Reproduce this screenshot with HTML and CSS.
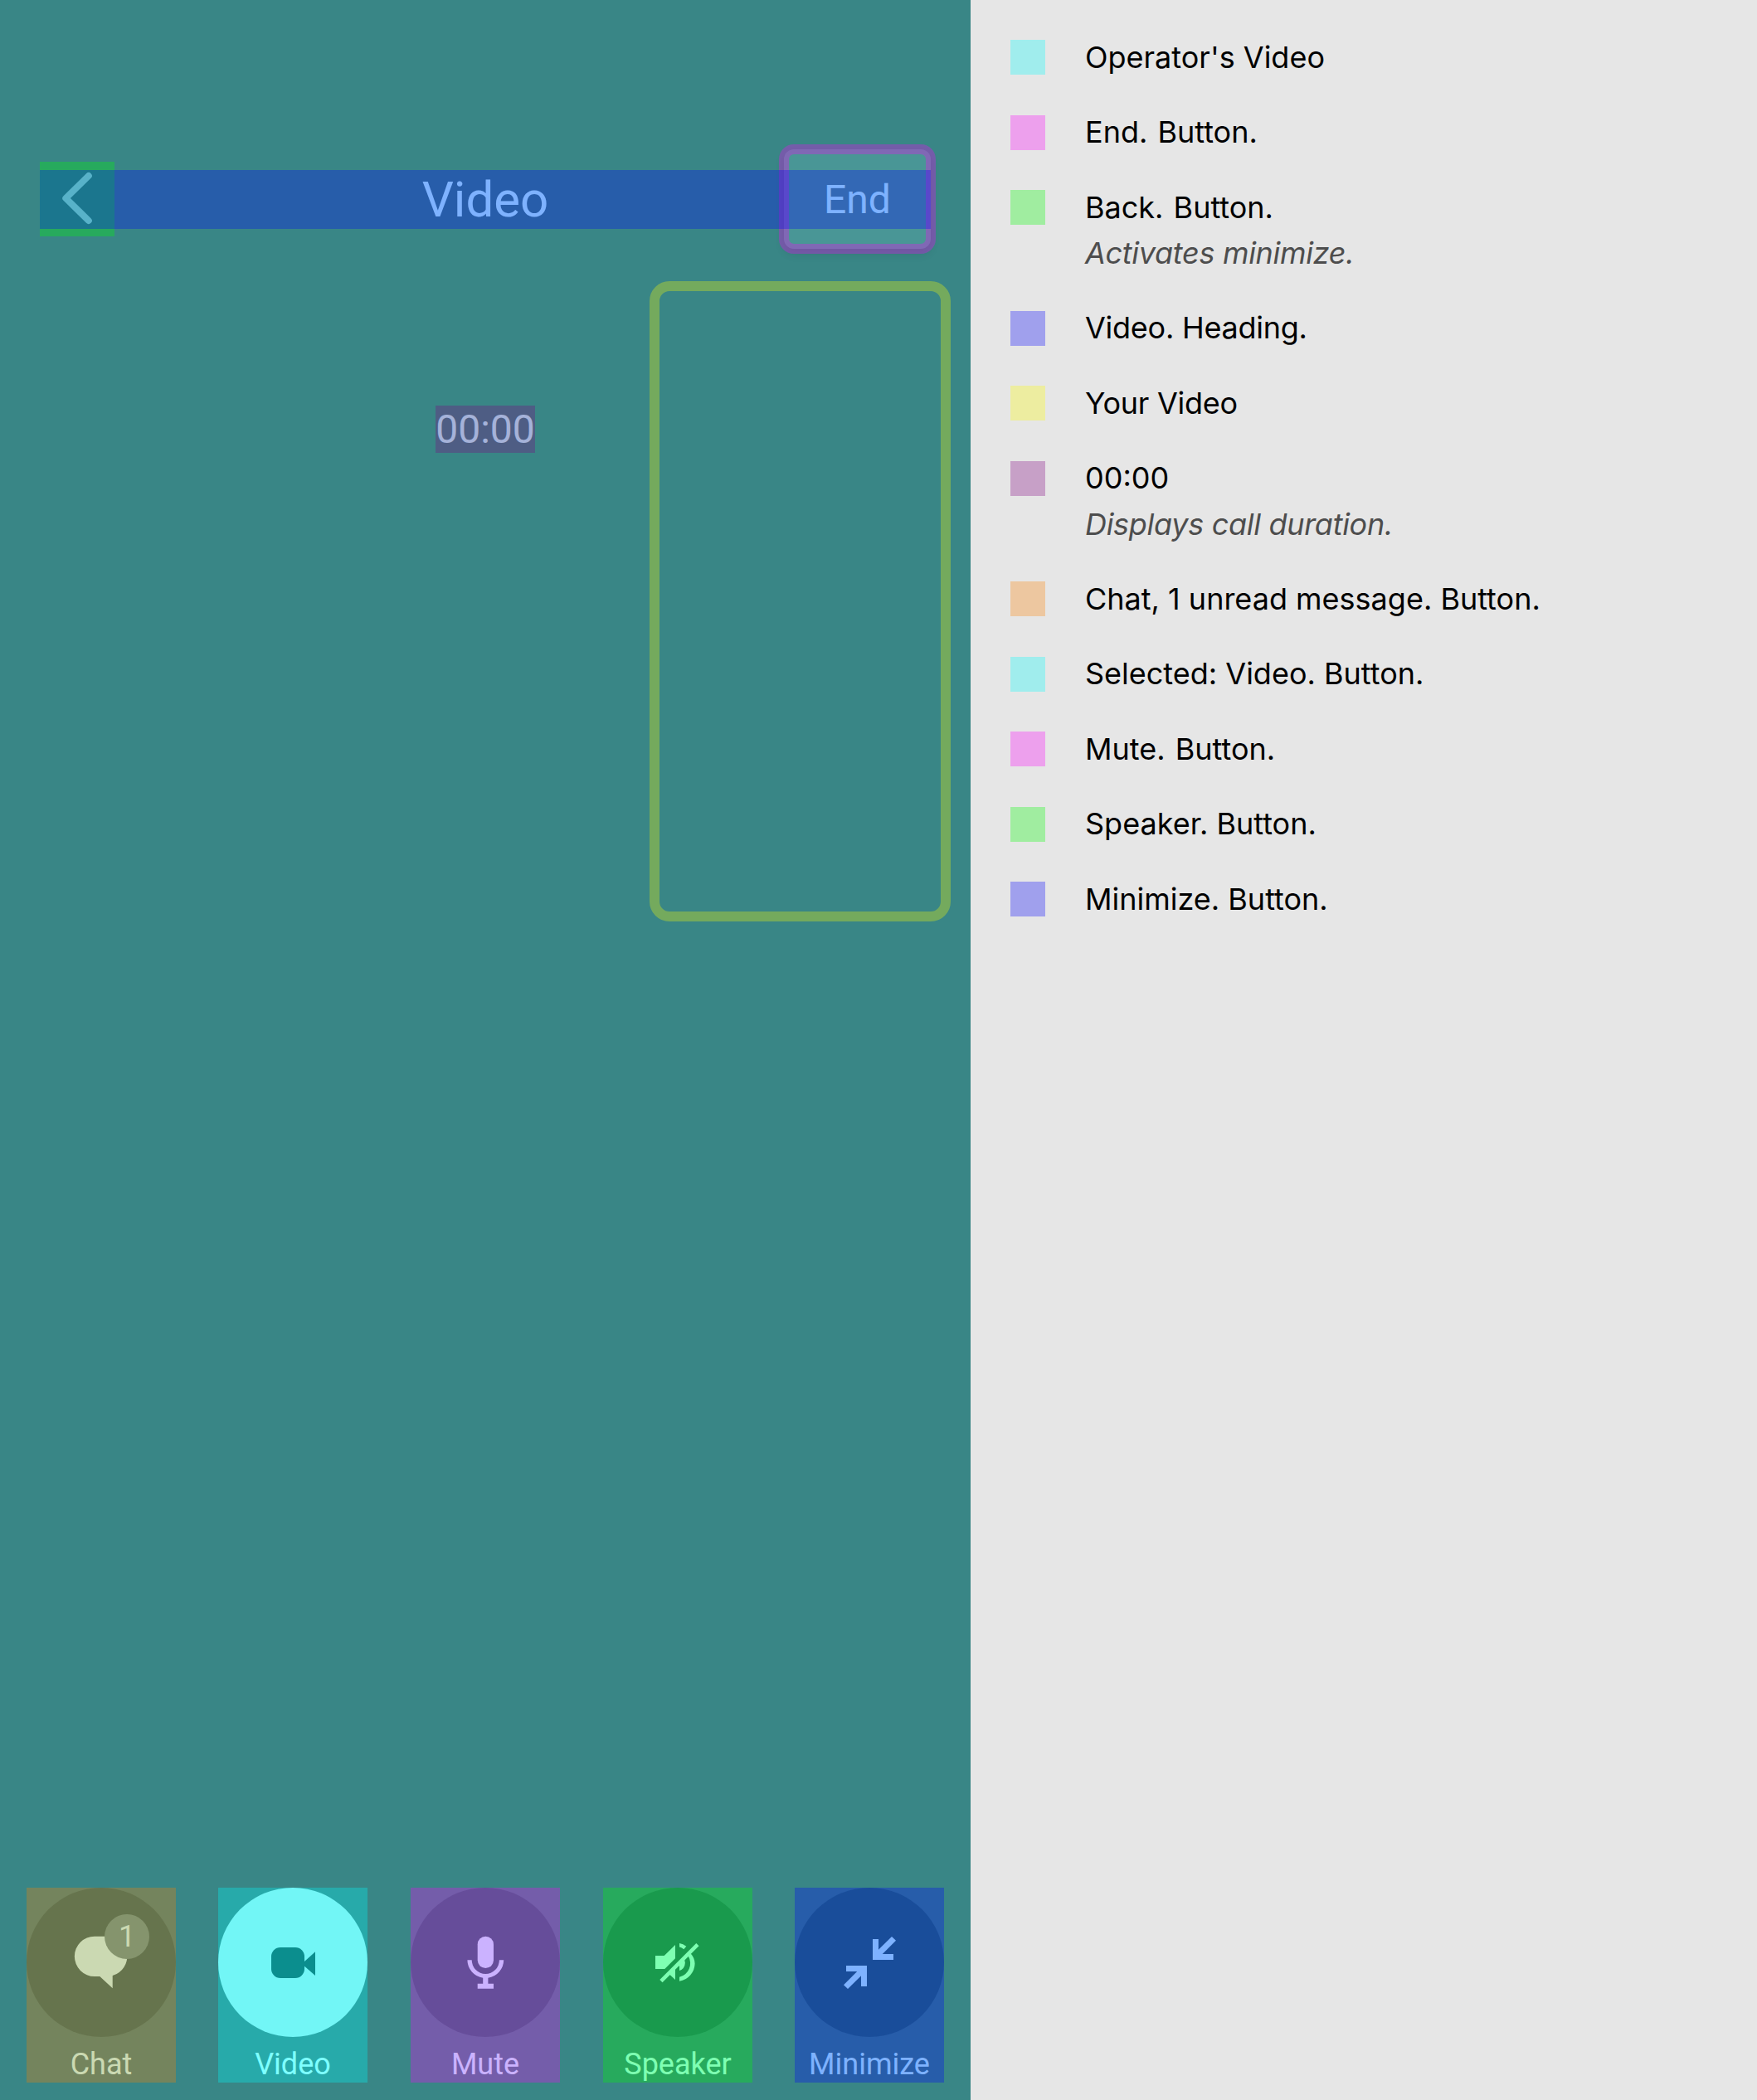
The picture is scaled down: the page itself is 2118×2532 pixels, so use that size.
FILE: index.html
```html
<!DOCTYPE html>
<html lang="en">
<head>
<meta charset="utf-8">
<title>Video call accessibility</title>
<link rel="stylesheet" href="styles.css">
</head>
<body>
<main class="phone">
  <header class="nav">
    <button class="back mark green" aria-label="Back">
      <svg viewBox="0 0 90 90" class="back-icon"><path d="M58.800 17 31.300 44 58.800 71"/></svg>
    </button>
    <h1 class="title">Video</h1>
    <button class="end">End</button>
  </header>
  <section class="stage">
    <div class="timer mark plum">00:00</div>
    <div class="self-video"></div>
  </section>
  <nav class="controls">
    <button class="control mark orange">
      <span class="disc">
        <svg viewBox="0 0 180 180"><path d="M82 58.7h15a24.1 24.1 0 0 1 6.700 47.300v15.300L88.300 107H82a24.1 24.1 0 0 1 0-48.300z"/></svg>
        <span class="badge">1</span>
      </span>
      <span class="label">Chat</span>
    </button>
    <button class="control selected mark cyan">
      <span class="disc">
        <svg viewBox="0 0 180 180"><rect x="64" y="72" width="40" height="37" rx="11"/><path d="M117 77.3V106L103.500 94.300V89.500z"/></svg>
      </span>
      <span class="label">Video</span>
    </button>
    <button class="control mark magenta">
      <span class="disc">
        <svg viewBox="0 0 180 180"><rect x="80.700" y="58.700" width="19.300" height="38.300" rx="9.650"/><path d="M68.400 87.300h5.300a16.600 16.600 0 0 0 33.200 0h5.300a21.900 21.900 0 0 1-18.800 21.400v7h6.600v6H80.700v-6h6.500v-7A21.900 21.900 0 0 1 68.400 87.300z"/></svg>
      </span>
      <span class="label">Mute</span>
    </button>
    <button class="control mark green">
      <span class="disc">
        <svg viewBox="0 0 180 180"><path d="M63 82h10.700L87 69v16.300L74.300 98H63zM68.300 111 112.300 67l3.200 3.200L71.500 114.200z"/><path d="M87 97.500v13.500l-6.700-6.300zM92 67q4.500.800 8.300 3.700l-3 3.600q-2.400-2.200-5.300-2.900z"/><path d="M105.700 79.500Q110.600 85 110.600 91.500A22 22 0 0 1 92 112.800v-5A17 17 0 0 0 102.700 82.500z"/><path d="M98 86.500 98.900 90.500Q98.500 98 92 100v-5.500l-1.500-.500z"/></svg>
      </span>
      <span class="label">Speaker</span>
    </button>
    <button class="control mark blue">
      <span class="disc">
        <svg viewBox="0 0 180 180"><path d="M94 62h7v12.700l16-15.700 5 4.700-16.200 16.300H119v7H94zM87 119h-7v-12.700L64 122l-5-4.700L75.200 101H62v-7h25z"/></svg>
      </span>
      <span class="label">Minimize</span>
    </button>
  </nav>
</main>
<aside class="legend">
  <div class="item"><i class="swatch cyan"></i><p class="name">Operator's Video</p></div>
  <div class="item"><i class="swatch magenta"></i><p class="name role">End. Button.</p></div>
  <div class="item"><i class="swatch green"></i><div><p class="name role">Back. Button.</p><p class="hint">Activates minimize.</p></div></div>
  <div class="item"><i class="swatch blue"></i><p class="name tight">Video. Heading.</p></div>
  <div class="item"><i class="swatch yellow"></i><p class="name tight">Your Video</p></div>
  <div class="item"><i class="swatch plum"></i><div><p class="name">00:00</p><p class="hint">Displays call duration.</p></div></div>
  <div class="item"><i class="swatch orange"></i><p class="name">Chat, 1 unread message. Button.</p></div>
  <div class="item"><i class="swatch cyan"></i><p class="name">Selected: Video. Button.</p></div>
  <div class="item"><i class="swatch magenta"></i><p class="name role">Mute. Button.</p></div>
  <div class="item"><i class="swatch green"></i><p class="name">Speaker. Button.</p></div>
  <div class="item"><i class="swatch blue"></i><p class="name">Minimize. Button.</p></div>
</aside>
</body>
</html>
```
FILE: styles.css
```css
* { box-sizing: border-box; }

body {
  margin: 0;
  display: flex;
  width: 2118px;
  height: 2532px;
  background: #e6e6e6;
}

button {
  padding: 0;
  border: 0;
  background: none;
  color: inherit;
  font: inherit;
}

h1, p { margin: 0; font-weight: 400; }

.cyan { --tint: 0, 255, 255; }
.magenta { --tint: 255, 0, 255; }
.green { --tint: 0, 255, 0; }
.blue { --tint: 0, 0, 255; }
.yellow { --tint: 255, 255, 0; }
.plum { --tint: 128, 0, 128; }
.orange { --tint: 255, 128, 0; }

.phone {
  display: flex;
  flex: none;
  flex-direction: column;
  width: 1170px;
  height: 2532px;
  padding: 180px 0 21px;
  background: #398686;
  color: #b5ffff;
  font-family: Roboto, sans-serif;
}

/* Translucent highlight laid over an accessible element */
.mark { position: relative; }
.mark::after {
  content: "";
  position: absolute;
  inset: 0;
  background: rgba(var(--tint), .3);
}

.nav {
  position: relative;
  display: grid;
  grid-template-columns: 177px 1fr 177px;
  align-items: center;
  height: 120px;
  margin: 0 48px;
}
.nav::after {
  content: "";
  position: absolute;
  inset: 25px 0 24px;
  background: rgba(0, 0, 255, .3);
}

.back { width: 90px; height: 90px; }
.back-icon {
  display: block;
  width: 90px;
  height: 90px;
  fill: none;
  stroke: #b5ffff;
  stroke-width: 8;
  stroke-linecap: round;
  stroke-linejoin: round;
}

.title {
  font-size: 60px;
  line-height: 71px;
  text-align: center;
}

.end {
  position: relative;
  height: 120px;
  border-radius: 12px;
  background: #499696;
  box-shadow: 0 6px 12px rgba(0, 0, 0, .1);
  font-size: 48px;
}
.end::after {
  content: "";
  position: absolute;
  inset: -6px;
  border: 12px solid rgba(255, 0, 255, .3);
  border-radius: 18px;
}

.stage {
  display: grid;
  grid-template-columns: 1fr 120px 1fr;
  align-items: start;
  padding: 39px 24px 0;
}
.timer {
  grid-column: 2;
  height: 57px;
  margin-top: 150px;
  font-size: 48px;
  line-height: 57px;
  text-align: center;
}
.self-video {
  justify-self: end;
  width: 363px;
  height: 771.5px;
  border: 12px solid rgba(255, 255, 0, .3);
  border-radius: 24px;
}

.controls {
  display: grid;
  grid-template-columns: 231px 232px 232px 231px 180px;
  margin-top: auto;
  padding: 0 32px;
}
.control {
  display: flex;
  flex-direction: column;
  width: 180px;
  height: 235px;
}
.disc {
  position: relative;
  width: 180px;
  height: 180px;
  border-radius: 50%;
  background: #256f6f;
}
.disc svg { display: block; width: 180px; height: 180px; fill: #b5ffff; }
.selected .disc { background: #a4f2f3; }
.selected .disc svg { fill: #105e5e; }
.badge {
  position: absolute;
  left: 94px;
  top: 32px;
  width: 54px;
  height: 54px;
  border-radius: 50%;
  background: #519d9d;
  font-size: 36px;
  line-height: 54px;
  text-align: center;
}
.label {
  width: 100%;
  margin-top: 12px;
  font-size: 36px;
  line-height: 42px;
  text-align: center;
}

.legend {
  display: flex;
  flex-direction: column;
  gap: 48.5px;
  flex: 1;
  padding: 48px 48px 0;
  color: #000;
  font-family: Inter, sans-serif;
  font-size: 36px;
  line-height: 42px;
}
.item { display: flex; gap: 48px; }
.swatch {
  width: 42px;
  height: 42px;
  flex: none;
  background: rgba(var(--tint), .3);
}
.name {
  margin-top: -.1px;
  white-space: nowrap;
}
.role { word-spacing: 2px; }
.tight { letter-spacing: -.25px; }
.hint {
  margin-top: 13.1px;
  color: #4d4d4d;
  font-style: italic;
  letter-spacing: -.3px;
}
```
